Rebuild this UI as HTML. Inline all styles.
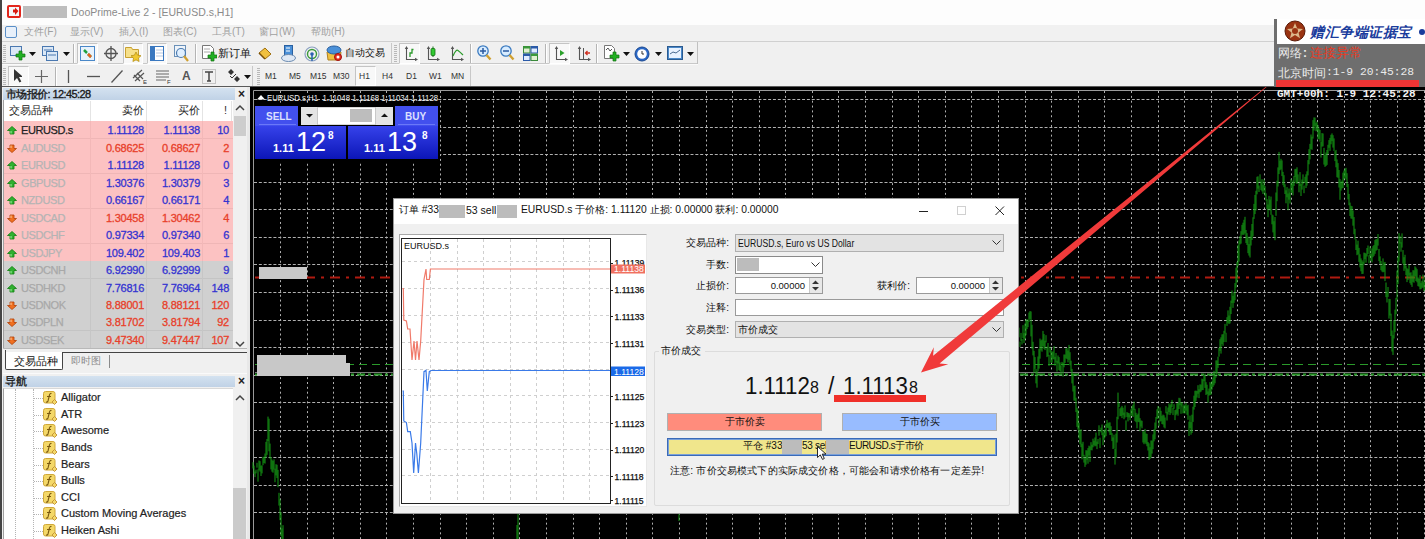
<!DOCTYPE html>
<html><head><meta charset="utf-8">
<style>
*{margin:0;padding:0;box-sizing:border-box}
html,body{width:1425px;height:539px;overflow:hidden;background:#f0f0f0;font-family:"Liberation Sans",sans-serif;position:relative}
.a{position:absolute}
.t{position:absolute;white-space:nowrap;line-height:1}
</style></head><body>
<!-- title bar -->
<div class="a" style="left:0;top:0;width:1425px;height:25px;background:#fdfdfd"></div>
<div class="a" style="left:0;top:0;width:1.5px;height:539px;background:#454545;z-index:50"></div>
<!-- app icon -->
<svg class="a" style="left:7px;top:5px" width="14" height="13" viewBox="0 0 14 13"><rect x="0" y="0" width="14" height="13" rx="2" fill="#e2261c"/><rect x="2" y="2" width="10" height="9" fill="#f4f8fa"/><path d="M8 2.5l3.5 3.5L8 10V7.5H6V4.5h2z" fill="#d81c12"/></svg>
<div class="a" style="left:23px;top:6px;width:44px;height:12px;background:#bdbdbd"></div>
<div class="t" style="left:71px;top:7px;font-size:10.5px;color:#8a8a8a">DooPrime-Live 2 - [EURUSD.s,H1]</div>
<!-- menu bar -->
<div class="a" style="left:2px;top:25px;width:1423px;height:16px;background:#f1f1f1"></div>
<div class="a" style="left:2px;top:41px;width:1423px;height:1px;background:#d0d0d0"></div>
<div class="a" style="left:5px;top:26px;width:12px;height:12px;border:1px solid #5a8fc8;border-radius:2px;background:#e8f0fa"></div>
<div class="t" style="left:24px;top:27px;font-size:10px;color:#a0a0a0;word-spacing:0">文件(F)</div>
<div class="t" style="left:70px;top:27px;font-size:10px;color:#a0a0a0">显示(V)</div>
<div class="t" style="left:119px;top:27px;font-size:10px;color:#a0a0a0">插入(I)</div>
<div class="t" style="left:163px;top:27px;font-size:10px;color:#a0a0a0">图表(C)</div>
<div class="t" style="left:212px;top:27px;font-size:10px;color:#a0a0a0">工具(T)</div>
<div class="t" style="left:259px;top:27px;font-size:10px;color:#a0a0a0">窗口(W)</div>
<div class="t" style="left:311px;top:27px;font-size:10px;color:#a0a0a0">帮助(H)</div>
<!-- toolbars -->
<div id="tb1" class="a" style="left:2px;top:42px;width:1423px;height:23px;background:#f0f0f0"></div>
<div id="tb2" class="a" style="left:2px;top:65px;width:1423px;height:22px;background:#f0f0f0"></div>
<!--TOOLBAR-->
<div class="a" style="left:2px;top:63px;width:696px;height:1px;background:#c8c8c8"></div>
<div class="a" style="left:2px;top:64px;width:696px;height:1px;background:#fafafa"></div>
<div class="a" style="left:2px;top:86px;width:1423px;height:1px;background:#5a5a5a"></div>
<div class="a" style="left:3px;top:45px;width:3px;height:17px;background:repeating-linear-gradient(#b8b8b8 0 1px,transparent 1px 2px)"></div>
<svg class="a" style="left:10px;top:46px" width="16" height="15" viewBox="0 0 16 15"><rect x="0.5" y="0.5" width="11" height="9" fill="#dbe8f6" stroke="#4a78b0"/><path d="M9 5h3v3h3v3h-3v3H9v-3H6V8h3z" fill="#22b022" stroke="#127012" stroke-width="0.7"/></svg>
<svg class="a" style="left:29px;top:52px" width="7" height="4"><path d="M0 0H7L3.5 4Z" fill="#111"/></svg>
<svg class="a" style="left:42px;top:46px" width="16" height="15" viewBox="0 0 16 15"><rect x="0.5" y="0.5" width="11" height="9" fill="#dbe8f6" stroke="#4a78b0"/><rect x="4.5" y="5.5" width="11" height="9" fill="#dbe8f6" stroke="#4a78b0"/><path d="M2 4h8M6 9h8" stroke="#4a78b0"/></svg>
<svg class="a" style="left:63px;top:52px" width="7" height="4"><path d="M0 0H7L3.5 4Z" fill="#111"/></svg>
<div class="a" style="left:73px;top:44px;width:1px;height:19px;background:#b4b4b4"></div><div class="a" style="left:74px;top:44px;width:1px;height:19px;background:#fff"></div>
<div class="a" style="left:77px;top:43px;width:21px;height:21px;background:#f8f8f8;border:1px solid #c4c4c4;border-right-color:#fff;border-bottom-color:#fff"></div>
<svg class="a" style="left:80px;top:46px" width="15" height="15" viewBox="0 0 15 15"><rect x="0.5" y="0.5" width="14" height="14" fill="#e8f2fc" stroke="#4a88c8"/><path d="M4 4l3 3M8 8l3 3" stroke="#20a040" stroke-width="2.5"/><path d="M8 8l3 3" stroke="#e86020" stroke-width="2.5"/></svg>
<svg class="a" style="left:104px;top:46px" width="14" height="15" viewBox="0 0 14 15"><circle cx="7" cy="7.5" r="5" fill="none" stroke="#555" stroke-width="1.3"/><path d="M7 0v15M0 7.5h14" stroke="#555" stroke-width="1.3"/></svg>
<div class="a" style="left:123px;top:43px;width:20px;height:21px;background:#f8f8f8;border:1px solid #c4c4c4;border-right-color:#fff;border-bottom-color:#fff"></div>
<svg class="a" style="left:125px;top:45px" width="17" height="17" viewBox="0 0 17 17"><path d="M0.5 2.5h6l1 2h6v8h-13z" fill="#f6e08a" stroke="#c8a030"/><path d="M11 7l1.6 3.2 3.4.5-2.5 2.4.6 3.4-3.1-1.6-3.1 1.6.6-3.4-2.5-2.4 3.4-.5z" fill="#f0c830" stroke="#b08a10" stroke-width="0.7"/></svg>
<div class="a" style="left:147px;top:43px;width:20px;height:21px;background:#f8f8f8;border:1px solid #c4c4c4;border-right-color:#fff;border-bottom-color:#fff"></div>
<svg class="a" style="left:150px;top:46px" width="14" height="15" viewBox="0 0 14 15"><rect x="0.5" y="0.5" width="13" height="14" fill="#fff" stroke="#3a78c0"/><rect x="1" y="1" width="4" height="13" fill="#3a78c0"/><path d="M6 4h7M6 7h7M6 10h7" stroke="#b8c8e0"/></svg>
<svg class="a" style="left:174px;top:45px" width="15" height="17" viewBox="0 0 15 17"><rect x="0.5" y="0.5" width="11" height="11" fill="#eef4fa" stroke="#6a90b8"/><circle cx="7" cy="8" r="4.5" fill="#dfefff" stroke="#4a7ab0" stroke-width="1.2"/><path d="M10 11l4 5" stroke="#d0a030" stroke-width="2.2"/></svg>
<div class="a" style="left:195px;top:44px;width:1px;height:19px;background:#b4b4b4"></div><div class="a" style="left:196px;top:44px;width:1px;height:19px;background:#fff"></div>
<svg class="a" style="left:202px;top:45px" width="15" height="17" viewBox="0 0 15 17"><path d="M0.5 0.5h8l3 3v10h-11z" fill="#fff" stroke="#777"/><path d="M2 4h6M2 7h6" stroke="#aaa"/><path d="M9 7h3v3h3v3h-3v3H9v-3H6v-3h3z" fill="#22b022" stroke="#127012" stroke-width="0.7"/></svg>
<div class="t" style="left:218px;top:48px;font-size:10.5px;color:#111">新订单</div>
<svg class="a" style="left:258px;top:47px" width="14" height="13" viewBox="0 0 14 13"><path d="M1 6L7 1l6 6-6 5z" fill="#f0c040" stroke="#a07010"/><path d="M1 6l6 6" stroke="#7a5008" stroke-width="1.5"/></svg>
<svg class="a" style="left:281px;top:45px" width="15" height="17" viewBox="0 0 15 17"><rect x="3.5" y="0.5" width="8" height="10" fill="#4a90d8" stroke="#2a60a0"/><path d="M5 3h4M5 6h4" stroke="#fff"/><ellipse cx="7.5" cy="13" rx="7" ry="3.5" fill="#dfe8f4" stroke="#6a8ab0"/></svg>
<svg class="a" style="left:304px;top:46px" width="16" height="16" viewBox="0 0 16 16"><circle cx="8" cy="8" r="7" fill="none" stroke="#8aa0c0" stroke-width="1.2"/><circle cx="8" cy="8" r="4.5" fill="none" stroke="#3a9a3a" stroke-width="1.4"/><circle cx="8" cy="8" r="1.8" fill="#2a60b0"/><path d="M8 9v6" stroke="#2a60b0" stroke-width="1.5"/></svg>
<svg class="a" style="left:326px;top:45px" width="17" height="17" viewBox="0 0 17 17"><path d="M1 7h14l-1 8H2z" fill="#f0c040" stroke="#b08020"/><ellipse cx="8" cy="5" rx="7" ry="4" fill="#4a90d8" stroke="#2a60a0"/><circle cx="12" cy="12" r="3.5" fill="#e83020" stroke="#a01010"/><circle cx="12" cy="12" r="1.5" fill="#fff"/></svg>
<div class="t" style="left:345px;top:48px;font-size:10px;color:#111">自动交易</div>
<div class="a" style="left:391px;top:43px;width:1px;height:21px;background:#c8c8c8"></div>
<div class="a" style="left:394px;top:45px;width:3px;height:17px;background:repeating-linear-gradient(#b8b8b8 0 1px,transparent 1px 2px)"></div>
<div class="a" style="left:399px;top:43px;width:21px;height:21px;background:#f8f8f8;border:1px solid #c4c4c4;border-right-color:#fff;border-bottom-color:#fff"></div>
<svg class="a" style="left:403px;top:46px" width="15" height="15" viewBox="0 0 15 15"><path d="M3.5 1.5V13.5H14" stroke="#555" stroke-width="1.1" fill="none"/><path d="M3.5 0L1.8 3h3.4zM15 13.5l-3-1.7v3.4z" fill="#555"/><path d="M7 11V7H9V3.5H10.5" stroke="#2a9a2a" stroke-width="1.3" fill="none"/></svg>
<svg class="a" style="left:425px;top:46px" width="15" height="15" viewBox="0 0 15 15"><path d="M3.5 1.5V13.5H14" stroke="#555" stroke-width="1.1" fill="none"/><path d="M3.5 0L1.8 3h3.4zM15 13.5l-3-1.7v3.4z" fill="#555"/><path d="M8 0.5V11" stroke="#127012"/><rect x="6" y="2.5" width="4" height="7" rx="1" fill="#30c830" stroke="#127012" stroke-width="0.8"/></svg>
<svg class="a" style="left:449px;top:46px" width="15" height="15" viewBox="0 0 15 15"><path d="M3.5 1.5V13.5H14" stroke="#555" stroke-width="1.1" fill="none"/><path d="M3.5 0L1.8 3h3.4zM15 13.5l-3-1.7v3.4z" fill="#555"/><path d="M4 10Q7 3 9 4.5T14 9" stroke="#2a9a2a" stroke-width="1.2" fill="none"/></svg>
<div class="a" style="left:470px;top:44px;width:1px;height:19px;background:#b4b4b4"></div><div class="a" style="left:471px;top:44px;width:1px;height:19px;background:#fff"></div>
<svg class="a" style="left:477px;top:45px" width="15" height="16" viewBox="0 0 15 16"><circle cx="6" cy="6" r="5.2" fill="#d8ecff" stroke="#3a7ac0" stroke-width="1.3"/><path d="M3 6h6M6 3v6" stroke="#2a5aa0" stroke-width="1.5"/><path d="M9.5 10l4 4.5" stroke="#d0a030" stroke-width="2.4"/></svg>
<svg class="a" style="left:500px;top:45px" width="15" height="16" viewBox="0 0 15 16"><circle cx="6" cy="6" r="5.2" fill="#d8ecff" stroke="#3a7ac0" stroke-width="1.3"/><path d="M3 6h6" stroke="#2a5aa0" stroke-width="1.5"/><path d="M9.5 10l4 4.5" stroke="#d0a030" stroke-width="2.4"/></svg>
<svg class="a" style="left:523px;top:46px" width="15" height="15" viewBox="0 0 15 15"><rect x="0.5" y="0.5" width="6.5" height="6.5" fill="#e0f0d0" stroke="#3a8a3a"/><rect x="0.5" y="0.5" width="6.5" height="2" fill="#3a9a3a"/><rect x="8" y="0.5" width="6.5" height="6.5" fill="#e0ecff" stroke="#2a5aa8"/><rect x="8" y="0.5" width="6.5" height="2" fill="#2a5aa8"/><rect x="0.5" y="8" width="6.5" height="6.5" fill="#e0ecff" stroke="#2a5aa8"/><rect x="0.5" y="8" width="6.5" height="2" fill="#2a5aa8"/><rect x="8" y="8" width="6.5" height="6.5" fill="#e0f0d0" stroke="#3a8a3a"/><rect x="8" y="8" width="6.5" height="2" fill="#3a9a3a"/></svg>
<div class="a" style="left:545px;top:44px;width:1px;height:19px;background:#b4b4b4"></div><div class="a" style="left:546px;top:44px;width:1px;height:19px;background:#fff"></div>
<div class="a" style="left:549px;top:43px;width:21px;height:21px;background:#f8f8f8;border:1px solid #c4c4c4;border-right-color:#fff;border-bottom-color:#fff"></div>
<svg class="a" style="left:553px;top:46px" width="15" height="15" viewBox="0 0 15 15"><path d="M3.5 1.5V13.5H14" stroke="#555" stroke-width="1.1" fill="none"/><path d="M3.5 0L1.8 3h3.4zM15 13.5l-3-1.7v3.4z" fill="#555"/><path d="M7 4v6l4.5-3z" fill="#2aa02a"/></svg>
<svg class="a" style="left:576px;top:46px" width="15" height="15" viewBox="0 0 15 15"><path d="M3.5 1.5V13.5H14" stroke="#555" stroke-width="1.1" fill="none"/><path d="M3.5 0L1.8 3h3.4zM15 13.5l-3-1.7v3.4z" fill="#555"/><path d="M7.5 2v11" stroke="#555"/><path d="M14 7H9.5M11.5 5l-2 2 2 2" stroke="#d03020" stroke-width="1.3" fill="none"/></svg>
<div class="a" style="left:596px;top:44px;width:1px;height:19px;background:#b4b4b4"></div><div class="a" style="left:597px;top:44px;width:1px;height:19px;background:#fff"></div>
<svg class="a" style="left:604px;top:45px" width="16" height="17" viewBox="0 0 16 17"><path d="M0.5 0.5h7l3 3v10h-10z" fill="#fff" stroke="#777"/><path d="M2 5l2-2 2 3 2-2" stroke="#555" fill="none"/><path d="M9 7h3v3h3v3h-3v3H9v-3H6v-3h3z" fill="#22b022" stroke="#127012" stroke-width="0.7"/></svg>
<svg class="a" style="left:623px;top:52px" width="7" height="4"><path d="M0 0H7L3.5 4Z" fill="#111"/></svg>
<svg class="a" style="left:634px;top:46px" width="16" height="16" viewBox="0 0 16 16"><circle cx="8" cy="8" r="7" fill="#2a68c8" stroke="#1a4890"/><circle cx="8" cy="8" r="4.8" fill="#fff"/><path d="M8 5v3h2" stroke="#333" fill="none"/></svg>
<svg class="a" style="left:655px;top:52px" width="7" height="4"><path d="M0 0H7L3.5 4Z" fill="#111"/></svg>
<svg class="a" style="left:667px;top:46px" width="16" height="14" viewBox="0 0 16 14"><rect x="0.5" y="0.5" width="15" height="13" fill="#4a88c8" stroke="#2a5a90"/><rect x="2" y="2" width="12" height="10" fill="#e8f2ff"/><path d="M3 8l3-2 3 1 4-3" stroke="#4a6a90" fill="none"/></svg>
<svg class="a" style="left:687px;top:52px" width="7" height="4"><path d="M0 0H7L3.5 4Z" fill="#111"/></svg>
<div class="a" style="left:697px;top:42px;width:1px;height:22px;background:#c0c0c0"></div>
<div class="a" style="left:3px;top:68px;width:3px;height:17px;background:repeating-linear-gradient(#b8b8b8 0 1px,transparent 1px 2px)"></div>
<div class="a" style="left:8px;top:66px;width:21px;height:20px;background:#f8f8f8;border:1px solid #c4c4c4;border-right-color:#fff;border-bottom-color:#fff"></div>
<svg class="a" style="left:13px;top:69px" width="9" height="14" viewBox="0 0 9 14"><path d="M1 0v12l3-3 2.5 4.5 1.8-1L6 8h4z" fill="#333"/></svg>
<svg class="a" style="left:35px;top:70px" width="13" height="13" viewBox="0 0 13 13"><path d="M6.5 0v13M0 6.5h13" stroke="#666" stroke-width="1.2"/></svg>
<div class="a" style="left:55px;top:67px;width:1px;height:19px;background:#b4b4b4"></div><div class="a" style="left:56px;top:67px;width:1px;height:19px;background:#fff"></div>
<svg class="a" style="left:67px;top:70px" width="3" height="13" viewBox="0 0 3 13"><path d="M1.5 0v13" stroke="#555" stroke-width="1.3"/></svg>
<svg class="a" style="left:87px;top:75px" width="13" height="3" viewBox="0 0 13 3"><path d="M0 1.5h13" stroke="#555" stroke-width="1.3"/></svg>
<svg class="a" style="left:111px;top:70px" width="12" height="13" viewBox="0 0 12 13"><path d="M0.5 12.5L11.5 0.5" stroke="#555" stroke-width="1.3"/></svg>
<svg class="a" style="left:132px;top:69px" width="15" height="15" viewBox="0 0 15 15"><path d="M1 9L10 1M3 12L12 4M2 6l6 6M5 4l6 6" stroke="#555" stroke-width="1.2"/><text x="11" y="15" font-size="6" font-family="Liberation Sans" fill="#333">E</text></svg>
<svg class="a" style="left:155px;top:70px" width="16" height="14" viewBox="0 0 16 14"><path d="M1 1h13M1 4h13M1 7h13M1 10h10" stroke="#666"/><text x="12" y="14" font-size="6" font-family="Liberation Sans" fill="#333">F</text></svg>
<div class="t" style="left:182px;top:70px;font-size:12px;color:#555;font-weight:bold">A</div>
<svg class="a" style="left:202px;top:69px" width="14" height="15" viewBox="0 0 14 15"><rect x="0.5" y="0.5" width="13" height="14" fill="none" stroke="#999" stroke-dasharray="1 1"/><path d="M3 3h8M7 3v9M5 12h4" stroke="#444" stroke-width="1.5"/></svg>
<svg class="a" style="left:228px;top:69px" width="12" height="13" viewBox="0 0 12 13"><path d="M3 0l3 3-3 3-3-3zM9 7l3 3-3 3-3-3z" fill="#333"/><path d="M2 7l2 2 4-4" stroke="#333" fill="none"/></svg>
<svg class="a" style="left:244px;top:75px" width="7" height="4"><path d="M0 0H7L3.5 4Z" fill="#111"/></svg>
<div class="a" style="left:252px;top:66px;width:1px;height:20px;background:#c8c8c8"></div>
<div class="a" style="left:257px;top:68px;width:3px;height:17px;background:repeating-linear-gradient(#b8b8b8 0 1px,transparent 1px 2px)"></div>
<div class="t" style="left:265px;top:72px;font-size:8.5px;color:#333">M1</div>
<div class="t" style="left:289px;top:72px;font-size:8.5px;color:#333">M5</div>
<div class="t" style="left:310px;top:72px;font-size:8.5px;color:#333">M15</div>
<div class="t" style="left:333px;top:72px;font-size:8.5px;color:#333">M30</div>
<div class="a" style="left:355px;top:66px;width:21px;height:20px;background:#f8f8f8;border:1px solid #c4c4c4;border-right-color:#fff;border-bottom-color:#fff"></div>
<div class="t" style="left:359px;top:72px;font-size:8.5px;color:#333">H1</div>
<div class="t" style="left:382px;top:72px;font-size:8.5px;color:#333">H4</div>
<div class="t" style="left:406px;top:72px;font-size:8.5px;color:#333">D1</div>
<div class="t" style="left:429px;top:72px;font-size:8.5px;color:#333">W1</div>
<div class="t" style="left:451px;top:72px;font-size:8.5px;color:#333">MN</div>
<div class="a" style="left:470px;top:66px;width:1px;height:20px;background:#c8c8c8"></div>
<!--/TOOLBAR-->
<!--LEFT-->
<div class="a" style="left:2px;top:87px;width:248px;height:452px;background:#f0f0f0"></div>
<div class="a" style="left:3px;top:88px;width:232px;height:12px;background:linear-gradient(#d4e2f0,#c0d2e6)"></div>
<div class="t" style="left:6px;top:89px;font-size:11px;letter-spacing:-0.6px;-webkit-text-stroke:0.35px #1a1a1a;color:#1a1a1a">市场报价: 12:45:28</div>
<div class="t" style="left:238px;top:88px;font-size:12px;font-weight:bold;color:#222">×</div>
<div class="a" style="left:3px;top:100px;width:230px;height:248px;background:#fff;border-left:1px solid #a0a0a0"></div>
<div class="t" style="left:9px;top:105px;font-size:10.5px;color:#222">交易品种</div>
<div class="t" style="left:122px;top:105px;font-size:10.5px;color:#222">卖价</div>
<div class="t" style="left:178px;top:105px;font-size:10.5px;color:#222">买价</div>
<div class="t" style="left:224px;top:105px;font-size:11px;color:#333">!</div>
<div class="a" style="left:90px;top:101px;width:1px;height:20px;background:#e4e4e4"></div>
<div class="a" style="left:146px;top:101px;width:1px;height:20px;background:#e4e4e4"></div>
<div class="a" style="left:202px;top:101px;width:1px;height:20px;background:#e4e4e4"></div>
<div class="a" style="left:231px;top:101px;width:1px;height:20px;background:#e4e4e4"></div>
<div class="a" style="left:4px;top:121px;width:229px;height:18px;background:#fcc2c2;border-bottom:1px solid #efb6b6"></div>
<div class="a" style="left:90px;top:121px;width:1px;height:18px;background:#f3b8b8"></div>
<div class="a" style="left:146px;top:121px;width:1px;height:18px;background:#f3b8b8"></div>
<div class="a" style="left:202px;top:121px;width:1px;height:18px;background:#f3b8b8"></div>
<svg class="a" style="left:7px;top:126px" width="10" height="9"><path d="M5 0.5L9.5 4.5H7V8H3V4.5H0.5Z" fill="#30b030" stroke="#108010" stroke-width="0.8"/><path d="M4 5v2.5" stroke="#a0f0a0" stroke-width="1"/></svg>
<div class="t" style="left:21px;top:125px;font-size:11px;letter-spacing:-0.4px;-webkit-text-stroke:0.25px #222;color:#222">EURUSD.s</div>
<div class="t" style="right:1281px;top:125px;font-size:11px;letter-spacing:-0.25px;-webkit-text-stroke:0.3px #3434d0;color:#3434d0">1.11128</div>
<div class="t" style="right:1225px;top:125px;font-size:11px;letter-spacing:-0.25px;-webkit-text-stroke:0.3px #3434d0;color:#3434d0">1.11138</div>
<div class="t" style="right:1196px;top:125px;font-size:11px;letter-spacing:-0.25px;-webkit-text-stroke:0.3px #3434d0;color:#3434d0">10</div>
<div class="a" style="left:4px;top:139px;width:229px;height:18px;background:#fcc2c2;border-bottom:1px solid #efb6b6"></div>
<div class="a" style="left:90px;top:139px;width:1px;height:18px;background:#f3b8b8"></div>
<div class="a" style="left:146px;top:139px;width:1px;height:18px;background:#f3b8b8"></div>
<div class="a" style="left:202px;top:139px;width:1px;height:18px;background:#f3b8b8"></div>
<svg class="a" style="left:7px;top:144px" width="10" height="9"><path d="M5 8.5L9.5 4.5H7V1H3V4.5H0.5Z" fill="#f07020" stroke="#b04008" stroke-width="0.8"/><path d="M4 1.5v2.5" stroke="#ffd0a0" stroke-width="1"/></svg>
<div class="t" style="left:21px;top:143px;font-size:11px;letter-spacing:-0.4px;-webkit-text-stroke:0.25px #b4b4b4;color:#b4b4b4">AUDUSD</div>
<div class="t" style="right:1281px;top:143px;font-size:11px;letter-spacing:-0.25px;-webkit-text-stroke:0.3px #e8402a;color:#e8402a">0.68625</div>
<div class="t" style="right:1225px;top:143px;font-size:11px;letter-spacing:-0.25px;-webkit-text-stroke:0.3px #e8402a;color:#e8402a">0.68627</div>
<div class="t" style="right:1196px;top:143px;font-size:11px;letter-spacing:-0.25px;-webkit-text-stroke:0.3px #e8402a;color:#e8402a">2</div>
<div class="a" style="left:4px;top:156px;width:229px;height:18px;background:#fcc2c2;border-bottom:1px solid #efb6b6"></div>
<div class="a" style="left:90px;top:156px;width:1px;height:18px;background:#f3b8b8"></div>
<div class="a" style="left:146px;top:156px;width:1px;height:18px;background:#f3b8b8"></div>
<div class="a" style="left:202px;top:156px;width:1px;height:18px;background:#f3b8b8"></div>
<svg class="a" style="left:7px;top:161px" width="10" height="9"><path d="M5 0.5L9.5 4.5H7V8H3V4.5H0.5Z" fill="#30b030" stroke="#108010" stroke-width="0.8"/><path d="M4 5v2.5" stroke="#a0f0a0" stroke-width="1"/></svg>
<div class="t" style="left:21px;top:160px;font-size:11px;letter-spacing:-0.4px;-webkit-text-stroke:0.25px #b4b4b4;color:#b4b4b4">EURUSD</div>
<div class="t" style="right:1281px;top:160px;font-size:11px;letter-spacing:-0.25px;-webkit-text-stroke:0.3px #3434d0;color:#3434d0">1.11128</div>
<div class="t" style="right:1225px;top:160px;font-size:11px;letter-spacing:-0.25px;-webkit-text-stroke:0.3px #3434d0;color:#3434d0">1.11128</div>
<div class="t" style="right:1196px;top:160px;font-size:11px;letter-spacing:-0.25px;-webkit-text-stroke:0.3px #3434d0;color:#3434d0">0</div>
<div class="a" style="left:4px;top:174px;width:229px;height:18px;background:#fcc2c2;border-bottom:1px solid #efb6b6"></div>
<div class="a" style="left:90px;top:174px;width:1px;height:18px;background:#f3b8b8"></div>
<div class="a" style="left:146px;top:174px;width:1px;height:18px;background:#f3b8b8"></div>
<div class="a" style="left:202px;top:174px;width:1px;height:18px;background:#f3b8b8"></div>
<svg class="a" style="left:7px;top:179px" width="10" height="9"><path d="M5 0.5L9.5 4.5H7V8H3V4.5H0.5Z" fill="#30b030" stroke="#108010" stroke-width="0.8"/><path d="M4 5v2.5" stroke="#a0f0a0" stroke-width="1"/></svg>
<div class="t" style="left:21px;top:178px;font-size:11px;letter-spacing:-0.4px;-webkit-text-stroke:0.25px #b4b4b4;color:#b4b4b4">GBPUSD</div>
<div class="t" style="right:1281px;top:178px;font-size:11px;letter-spacing:-0.25px;-webkit-text-stroke:0.3px #3434d0;color:#3434d0">1.30376</div>
<div class="t" style="right:1225px;top:178px;font-size:11px;letter-spacing:-0.25px;-webkit-text-stroke:0.3px #3434d0;color:#3434d0">1.30379</div>
<div class="t" style="right:1196px;top:178px;font-size:11px;letter-spacing:-0.25px;-webkit-text-stroke:0.3px #3434d0;color:#3434d0">3</div>
<div class="a" style="left:4px;top:191px;width:229px;height:18px;background:#fcc2c2;border-bottom:1px solid #efb6b6"></div>
<div class="a" style="left:90px;top:191px;width:1px;height:18px;background:#f3b8b8"></div>
<div class="a" style="left:146px;top:191px;width:1px;height:18px;background:#f3b8b8"></div>
<div class="a" style="left:202px;top:191px;width:1px;height:18px;background:#f3b8b8"></div>
<svg class="a" style="left:7px;top:196px" width="10" height="9"><path d="M5 0.5L9.5 4.5H7V8H3V4.5H0.5Z" fill="#30b030" stroke="#108010" stroke-width="0.8"/><path d="M4 5v2.5" stroke="#a0f0a0" stroke-width="1"/></svg>
<div class="t" style="left:21px;top:195px;font-size:11px;letter-spacing:-0.4px;-webkit-text-stroke:0.25px #b4b4b4;color:#b4b4b4">NZDUSD</div>
<div class="t" style="right:1281px;top:195px;font-size:11px;letter-spacing:-0.25px;-webkit-text-stroke:0.3px #3434d0;color:#3434d0">0.66167</div>
<div class="t" style="right:1225px;top:195px;font-size:11px;letter-spacing:-0.25px;-webkit-text-stroke:0.3px #3434d0;color:#3434d0">0.66171</div>
<div class="t" style="right:1196px;top:195px;font-size:11px;letter-spacing:-0.25px;-webkit-text-stroke:0.3px #3434d0;color:#3434d0">4</div>
<div class="a" style="left:4px;top:209px;width:229px;height:18px;background:#fcc2c2;border-bottom:1px solid #efb6b6"></div>
<div class="a" style="left:90px;top:209px;width:1px;height:18px;background:#f3b8b8"></div>
<div class="a" style="left:146px;top:209px;width:1px;height:18px;background:#f3b8b8"></div>
<div class="a" style="left:202px;top:209px;width:1px;height:18px;background:#f3b8b8"></div>
<svg class="a" style="left:7px;top:214px" width="10" height="9"><path d="M5 8.5L9.5 4.5H7V1H3V4.5H0.5Z" fill="#f07020" stroke="#b04008" stroke-width="0.8"/><path d="M4 1.5v2.5" stroke="#ffd0a0" stroke-width="1"/></svg>
<div class="t" style="left:21px;top:213px;font-size:11px;letter-spacing:-0.4px;-webkit-text-stroke:0.25px #b4b4b4;color:#b4b4b4">USDCAD</div>
<div class="t" style="right:1281px;top:213px;font-size:11px;letter-spacing:-0.25px;-webkit-text-stroke:0.3px #e8402a;color:#e8402a">1.30458</div>
<div class="t" style="right:1225px;top:213px;font-size:11px;letter-spacing:-0.25px;-webkit-text-stroke:0.3px #e8402a;color:#e8402a">1.30462</div>
<div class="t" style="right:1196px;top:213px;font-size:11px;letter-spacing:-0.25px;-webkit-text-stroke:0.3px #e8402a;color:#e8402a">4</div>
<div class="a" style="left:4px;top:226px;width:229px;height:18px;background:#fcc2c2;border-bottom:1px solid #efb6b6"></div>
<div class="a" style="left:90px;top:226px;width:1px;height:18px;background:#f3b8b8"></div>
<div class="a" style="left:146px;top:226px;width:1px;height:18px;background:#f3b8b8"></div>
<div class="a" style="left:202px;top:226px;width:1px;height:18px;background:#f3b8b8"></div>
<svg class="a" style="left:7px;top:231px" width="10" height="9"><path d="M5 0.5L9.5 4.5H7V8H3V4.5H0.5Z" fill="#30b030" stroke="#108010" stroke-width="0.8"/><path d="M4 5v2.5" stroke="#a0f0a0" stroke-width="1"/></svg>
<div class="t" style="left:21px;top:230px;font-size:11px;letter-spacing:-0.4px;-webkit-text-stroke:0.25px #b4b4b4;color:#b4b4b4">USDCHF</div>
<div class="t" style="right:1281px;top:230px;font-size:11px;letter-spacing:-0.25px;-webkit-text-stroke:0.3px #3434d0;color:#3434d0">0.97334</div>
<div class="t" style="right:1225px;top:230px;font-size:11px;letter-spacing:-0.25px;-webkit-text-stroke:0.3px #3434d0;color:#3434d0">0.97340</div>
<div class="t" style="right:1196px;top:230px;font-size:11px;letter-spacing:-0.25px;-webkit-text-stroke:0.3px #3434d0;color:#3434d0">6</div>
<div class="a" style="left:4px;top:244px;width:229px;height:18px;background:#fcc2c2;border-bottom:1px solid #efb6b6"></div>
<div class="a" style="left:90px;top:244px;width:1px;height:18px;background:#f3b8b8"></div>
<div class="a" style="left:146px;top:244px;width:1px;height:18px;background:#f3b8b8"></div>
<div class="a" style="left:202px;top:244px;width:1px;height:18px;background:#f3b8b8"></div>
<svg class="a" style="left:7px;top:249px" width="10" height="9"><path d="M5 0.5L9.5 4.5H7V8H3V4.5H0.5Z" fill="#30b030" stroke="#108010" stroke-width="0.8"/><path d="M4 5v2.5" stroke="#a0f0a0" stroke-width="1"/></svg>
<div class="t" style="left:21px;top:248px;font-size:11px;letter-spacing:-0.4px;-webkit-text-stroke:0.25px #b4b4b4;color:#b4b4b4">USDJPY</div>
<div class="t" style="right:1281px;top:248px;font-size:11px;letter-spacing:-0.25px;-webkit-text-stroke:0.3px #3434d0;color:#3434d0">109.402</div>
<div class="t" style="right:1225px;top:248px;font-size:11px;letter-spacing:-0.25px;-webkit-text-stroke:0.3px #3434d0;color:#3434d0">109.403</div>
<div class="t" style="right:1196px;top:248px;font-size:11px;letter-spacing:-0.25px;-webkit-text-stroke:0.3px #3434d0;color:#3434d0">1</div>
<div class="a" style="left:4px;top:261px;width:229px;height:18px;background:#d0d0d0;border-bottom:1px solid #c4c4c4"></div>
<div class="a" style="left:90px;top:261px;width:1px;height:18px;background:#c6c6c6"></div>
<div class="a" style="left:146px;top:261px;width:1px;height:18px;background:#c6c6c6"></div>
<div class="a" style="left:202px;top:261px;width:1px;height:18px;background:#c6c6c6"></div>
<svg class="a" style="left:7px;top:266px" width="10" height="9"><path d="M5 0.5L9.5 4.5H7V8H3V4.5H0.5Z" fill="#30b030" stroke="#108010" stroke-width="0.8"/><path d="M4 5v2.5" stroke="#a0f0a0" stroke-width="1"/></svg>
<div class="t" style="left:21px;top:265px;font-size:11px;letter-spacing:-0.4px;-webkit-text-stroke:0.25px #a8a8a8;color:#a8a8a8">USDCNH</div>
<div class="t" style="right:1281px;top:265px;font-size:11px;letter-spacing:-0.25px;-webkit-text-stroke:0.3px #3434d0;color:#3434d0">6.92990</div>
<div class="t" style="right:1225px;top:265px;font-size:11px;letter-spacing:-0.25px;-webkit-text-stroke:0.3px #3434d0;color:#3434d0">6.92999</div>
<div class="t" style="right:1196px;top:265px;font-size:11px;letter-spacing:-0.25px;-webkit-text-stroke:0.3px #3434d0;color:#3434d0">9</div>
<div class="a" style="left:4px;top:279px;width:229px;height:18px;background:#d0d0d0;border-bottom:1px solid #c4c4c4"></div>
<div class="a" style="left:90px;top:279px;width:1px;height:18px;background:#c6c6c6"></div>
<div class="a" style="left:146px;top:279px;width:1px;height:18px;background:#c6c6c6"></div>
<div class="a" style="left:202px;top:279px;width:1px;height:18px;background:#c6c6c6"></div>
<svg class="a" style="left:7px;top:284px" width="10" height="9"><path d="M5 0.5L9.5 4.5H7V8H3V4.5H0.5Z" fill="#30b030" stroke="#108010" stroke-width="0.8"/><path d="M4 5v2.5" stroke="#a0f0a0" stroke-width="1"/></svg>
<div class="t" style="left:21px;top:283px;font-size:11px;letter-spacing:-0.4px;-webkit-text-stroke:0.25px #a8a8a8;color:#a8a8a8">USDHKD</div>
<div class="t" style="right:1281px;top:283px;font-size:11px;letter-spacing:-0.25px;-webkit-text-stroke:0.3px #3434d0;color:#3434d0">7.76816</div>
<div class="t" style="right:1225px;top:283px;font-size:11px;letter-spacing:-0.25px;-webkit-text-stroke:0.3px #3434d0;color:#3434d0">7.76964</div>
<div class="t" style="right:1196px;top:283px;font-size:11px;letter-spacing:-0.25px;-webkit-text-stroke:0.3px #3434d0;color:#3434d0">148</div>
<div class="a" style="left:4px;top:296px;width:229px;height:18px;background:#d0d0d0;border-bottom:1px solid #c4c4c4"></div>
<div class="a" style="left:90px;top:296px;width:1px;height:18px;background:#c6c6c6"></div>
<div class="a" style="left:146px;top:296px;width:1px;height:18px;background:#c6c6c6"></div>
<div class="a" style="left:202px;top:296px;width:1px;height:18px;background:#c6c6c6"></div>
<svg class="a" style="left:7px;top:301px" width="10" height="9"><path d="M5 8.5L9.5 4.5H7V1H3V4.5H0.5Z" fill="#f07020" stroke="#b04008" stroke-width="0.8"/><path d="M4 1.5v2.5" stroke="#ffd0a0" stroke-width="1"/></svg>
<div class="t" style="left:21px;top:300px;font-size:11px;letter-spacing:-0.4px;-webkit-text-stroke:0.25px #a8a8a8;color:#a8a8a8">USDNOK</div>
<div class="t" style="right:1281px;top:300px;font-size:11px;letter-spacing:-0.25px;-webkit-text-stroke:0.3px #e8402a;color:#e8402a">8.88001</div>
<div class="t" style="right:1225px;top:300px;font-size:11px;letter-spacing:-0.25px;-webkit-text-stroke:0.3px #e8402a;color:#e8402a">8.88121</div>
<div class="t" style="right:1196px;top:300px;font-size:11px;letter-spacing:-0.25px;-webkit-text-stroke:0.3px #e8402a;color:#e8402a">120</div>
<div class="a" style="left:4px;top:313px;width:229px;height:18px;background:#d0d0d0;border-bottom:1px solid #c4c4c4"></div>
<div class="a" style="left:90px;top:313px;width:1px;height:18px;background:#c6c6c6"></div>
<div class="a" style="left:146px;top:313px;width:1px;height:18px;background:#c6c6c6"></div>
<div class="a" style="left:202px;top:313px;width:1px;height:18px;background:#c6c6c6"></div>
<svg class="a" style="left:7px;top:318px" width="10" height="9"><path d="M5 8.5L9.5 4.5H7V1H3V4.5H0.5Z" fill="#f07020" stroke="#b04008" stroke-width="0.8"/><path d="M4 1.5v2.5" stroke="#ffd0a0" stroke-width="1"/></svg>
<div class="t" style="left:21px;top:317px;font-size:11px;letter-spacing:-0.4px;-webkit-text-stroke:0.25px #a8a8a8;color:#a8a8a8">USDPLN</div>
<div class="t" style="right:1281px;top:317px;font-size:11px;letter-spacing:-0.25px;-webkit-text-stroke:0.3px #e8402a;color:#e8402a">3.81702</div>
<div class="t" style="right:1225px;top:317px;font-size:11px;letter-spacing:-0.25px;-webkit-text-stroke:0.3px #e8402a;color:#e8402a">3.81794</div>
<div class="t" style="right:1196px;top:317px;font-size:11px;letter-spacing:-0.25px;-webkit-text-stroke:0.3px #e8402a;color:#e8402a">92</div>
<div class="a" style="left:4px;top:331px;width:229px;height:18px;background:#d0d0d0;border-bottom:1px solid #c4c4c4"></div>
<div class="a" style="left:90px;top:331px;width:1px;height:18px;background:#c6c6c6"></div>
<div class="a" style="left:146px;top:331px;width:1px;height:18px;background:#c6c6c6"></div>
<div class="a" style="left:202px;top:331px;width:1px;height:18px;background:#c6c6c6"></div>
<svg class="a" style="left:7px;top:336px" width="10" height="9"><path d="M5 8.5L9.5 4.5H7V1H3V4.5H0.5Z" fill="#f07020" stroke="#b04008" stroke-width="0.8"/><path d="M4 1.5v2.5" stroke="#ffd0a0" stroke-width="1"/></svg>
<div class="t" style="left:21px;top:335px;font-size:11px;letter-spacing:-0.4px;-webkit-text-stroke:0.25px #a8a8a8;color:#a8a8a8">USDSEK</div>
<div class="t" style="right:1281px;top:335px;font-size:11px;letter-spacing:-0.25px;-webkit-text-stroke:0.3px #e8402a;color:#e8402a">9.47340</div>
<div class="t" style="right:1225px;top:335px;font-size:11px;letter-spacing:-0.25px;-webkit-text-stroke:0.3px #e8402a;color:#e8402a">9.47447</div>
<div class="t" style="right:1196px;top:335px;font-size:11px;letter-spacing:-0.25px;-webkit-text-stroke:0.3px #e8402a;color:#e8402a">107</div>
<div class="a" style="left:233px;top:100px;width:14px;height:248px;background:#f0f0f0"></div>
<svg class="a" style="left:235px;top:104px" width="10" height="7"><path d="M1 6L5 2L9 6" stroke="#444" stroke-width="1.5" fill="none"/></svg>
<div class="a" style="left:234px;top:116px;width:12px;height:20px;background:#cdcdcd"></div>
<svg class="a" style="left:235px;top:341px" width="10" height="7"><path d="M1 1L5 5L9 1" stroke="#444" stroke-width="1.5" fill="none"/></svg>
<div class="a" style="left:3px;top:348px;width:244px;height:1px;background:#b8b8b8"></div>
<div class="a" style="left:3px;top:349px;width:244px;height:24px;background:#f0f0f0"></div>
<div class="a" style="left:62px;top:352px;width:185px;height:1px;background:#444"></div>
<div class="a" style="left:5px;top:352px;width:58px;height:18px;background:#fff;border:1px solid #444;border-top:none;border-radius:0 0 2px 2px"></div>
<div class="a" style="left:5px;top:350px;width:1px;height:3px;background:#444"></div>
<div class="t" style="left:14px;top:356px;font-size:10.5px;color:#111">交易品种</div>
<div class="t" style="left:71px;top:356px;font-size:10px;color:#8a8a8a">即时图</div>
<div class="a" style="left:109px;top:355px;width:1px;height:13px;background:#8a8a8a"></div>
<div class="a" style="left:3px;top:373px;width:244px;height:1px;background:#fafafa"></div>
<div class="a" style="left:3px;top:376px;width:232px;height:11px;background:linear-gradient(#d4e2f0,#c0d2e6)"></div>
<div class="t" style="left:5px;top:376px;font-size:11px;-webkit-text-stroke:0.35px #1a1a1a;color:#1a1a1a">导航</div>
<div class="t" style="left:238px;top:375px;font-size:12px;font-weight:bold;color:#222">×</div>
<div class="a" style="left:3px;top:388px;width:230px;height:151px;background:#fff;border-left:1px solid #a0a0a0;border-top:1px solid #d8d8d8"></div>
<div class="a" style="left:15px;top:389px;width:0;height:150px;border-left:1px dotted #b4b4b4"></div>
<div class="a" style="left:33px;top:389px;width:0;height:150px;border-left:1px dotted #b4b4b4"></div>
<div class="a" style="left:34px;top:398px;width:9px;height:0;border-top:1px dotted #b4b4b4"></div>
<svg class="a" style="left:43px;top:391px" width="15" height="15"><rect x="0.5" y="0.5" width="11.5" height="11.5" rx="2" fill="#f4d868" stroke="#d0a838"/><path d="M8.5 2.5Q7 2 6.5 4L5 10Q4.5 11.5 3 11M4 5.5h4" stroke="#7a5a10" stroke-width="1.1" fill="none"/><path d="M11.5 8.5l2.5 2.5-2.5 2.5-2.5-2.5z" fill="#f4d868" stroke="#c09030" stroke-width="0.9"/></svg>
<div class="t" style="left:61px;top:392px;font-size:11px;-webkit-text-stroke:0.2px #222;color:#222">Alligator</div>
<div class="a" style="left:34px;top:415px;width:9px;height:0;border-top:1px dotted #b4b4b4"></div>
<svg class="a" style="left:43px;top:408px" width="15" height="15"><rect x="0.5" y="0.5" width="11.5" height="11.5" rx="2" fill="#f4d868" stroke="#d0a838"/><path d="M8.5 2.5Q7 2 6.5 4L5 10Q4.5 11.5 3 11M4 5.5h4" stroke="#7a5a10" stroke-width="1.1" fill="none"/><path d="M11.5 8.5l2.5 2.5-2.5 2.5-2.5-2.5z" fill="#f4d868" stroke="#c09030" stroke-width="0.9"/></svg>
<div class="t" style="left:61px;top:409px;font-size:11px;-webkit-text-stroke:0.2px #222;color:#222">ATR</div>
<div class="a" style="left:34px;top:431px;width:9px;height:0;border-top:1px dotted #b4b4b4"></div>
<svg class="a" style="left:43px;top:424px" width="15" height="15"><rect x="0.5" y="0.5" width="11.5" height="11.5" rx="2" fill="#f4d868" stroke="#d0a838"/><path d="M8.5 2.5Q7 2 6.5 4L5 10Q4.5 11.5 3 11M4 5.5h4" stroke="#7a5a10" stroke-width="1.1" fill="none"/><path d="M11.5 8.5l2.5 2.5-2.5 2.5-2.5-2.5z" fill="#f4d868" stroke="#c09030" stroke-width="0.9"/></svg>
<div class="t" style="left:61px;top:425px;font-size:11px;-webkit-text-stroke:0.2px #222;color:#222">Awesome</div>
<div class="a" style="left:34px;top:448px;width:9px;height:0;border-top:1px dotted #b4b4b4"></div>
<svg class="a" style="left:43px;top:441px" width="15" height="15"><rect x="0.5" y="0.5" width="11.5" height="11.5" rx="2" fill="#f4d868" stroke="#d0a838"/><path d="M8.5 2.5Q7 2 6.5 4L5 10Q4.5 11.5 3 11M4 5.5h4" stroke="#7a5a10" stroke-width="1.1" fill="none"/><path d="M11.5 8.5l2.5 2.5-2.5 2.5-2.5-2.5z" fill="#f4d868" stroke="#c09030" stroke-width="0.9"/></svg>
<div class="t" style="left:61px;top:442px;font-size:11px;-webkit-text-stroke:0.2px #222;color:#222">Bands</div>
<div class="a" style="left:34px;top:465px;width:9px;height:0;border-top:1px dotted #b4b4b4"></div>
<svg class="a" style="left:43px;top:458px" width="15" height="15"><rect x="0.5" y="0.5" width="11.5" height="11.5" rx="2" fill="#f4d868" stroke="#d0a838"/><path d="M8.5 2.5Q7 2 6.5 4L5 10Q4.5 11.5 3 11M4 5.5h4" stroke="#7a5a10" stroke-width="1.1" fill="none"/><path d="M11.5 8.5l2.5 2.5-2.5 2.5-2.5-2.5z" fill="#f4d868" stroke="#c09030" stroke-width="0.9"/></svg>
<div class="t" style="left:61px;top:459px;font-size:11px;-webkit-text-stroke:0.2px #222;color:#222">Bears</div>
<div class="a" style="left:34px;top:481px;width:9px;height:0;border-top:1px dotted #b4b4b4"></div>
<svg class="a" style="left:43px;top:474px" width="15" height="15"><rect x="0.5" y="0.5" width="11.5" height="11.5" rx="2" fill="#f4d868" stroke="#d0a838"/><path d="M8.5 2.5Q7 2 6.5 4L5 10Q4.5 11.5 3 11M4 5.5h4" stroke="#7a5a10" stroke-width="1.1" fill="none"/><path d="M11.5 8.5l2.5 2.5-2.5 2.5-2.5-2.5z" fill="#f4d868" stroke="#c09030" stroke-width="0.9"/></svg>
<div class="t" style="left:61px;top:475px;font-size:11px;-webkit-text-stroke:0.2px #222;color:#222">Bulls</div>
<div class="a" style="left:34px;top:498px;width:9px;height:0;border-top:1px dotted #b4b4b4"></div>
<svg class="a" style="left:43px;top:491px" width="15" height="15"><rect x="0.5" y="0.5" width="11.5" height="11.5" rx="2" fill="#f4d868" stroke="#d0a838"/><path d="M8.5 2.5Q7 2 6.5 4L5 10Q4.5 11.5 3 11M4 5.5h4" stroke="#7a5a10" stroke-width="1.1" fill="none"/><path d="M11.5 8.5l2.5 2.5-2.5 2.5-2.5-2.5z" fill="#f4d868" stroke="#c09030" stroke-width="0.9"/></svg>
<div class="t" style="left:61px;top:492px;font-size:11px;-webkit-text-stroke:0.2px #222;color:#222">CCI</div>
<div class="a" style="left:34px;top:514px;width:9px;height:0;border-top:1px dotted #b4b4b4"></div>
<svg class="a" style="left:43px;top:507px" width="15" height="15"><rect x="0.5" y="0.5" width="11.5" height="11.5" rx="2" fill="#f4d868" stroke="#d0a838"/><path d="M8.5 2.5Q7 2 6.5 4L5 10Q4.5 11.5 3 11M4 5.5h4" stroke="#7a5a10" stroke-width="1.1" fill="none"/><path d="M11.5 8.5l2.5 2.5-2.5 2.5-2.5-2.5z" fill="#f4d868" stroke="#c09030" stroke-width="0.9"/></svg>
<div class="t" style="left:61px;top:508px;font-size:11px;-webkit-text-stroke:0.2px #222;color:#222">Custom Moving Averages</div>
<div class="a" style="left:34px;top:531px;width:9px;height:0;border-top:1px dotted #b4b4b4"></div>
<svg class="a" style="left:43px;top:524px" width="15" height="15"><rect x="0.5" y="0.5" width="11.5" height="11.5" rx="2" fill="#f4d868" stroke="#d0a838"/><path d="M8.5 2.5Q7 2 6.5 4L5 10Q4.5 11.5 3 11M4 5.5h4" stroke="#7a5a10" stroke-width="1.1" fill="none"/><path d="M11.5 8.5l2.5 2.5-2.5 2.5-2.5-2.5z" fill="#f4d868" stroke="#c09030" stroke-width="0.9"/></svg>
<div class="t" style="left:61px;top:525px;font-size:11px;-webkit-text-stroke:0.2px #222;color:#222">Heiken Ashi</div>
<div class="a" style="left:233px;top:388px;width:14px;height:151px;background:#f0f0f0"></div>
<svg class="a" style="left:235px;top:394px" width="10" height="7"><path d="M1 6L5 2L9 6" stroke="#444" stroke-width="1.5" fill="none"/></svg>
<div class="a" style="left:233px;top:488px;width:13px;height:51px;background:#cbcbcb"></div>
<div class="a" style="left:247px;top:87px;width:3px;height:452px;background:#e8e8e8"></div>
<!--/LEFT-->
<!--CHART-->
<svg class="a" style="left:0;top:0" width="1425" height="539" viewBox="0 0 1425 539">
<rect x="250" y="87" width="1175" height="452" fill="#000"/>
<path d="M253.5 539V90.5H1425" stroke="#9a9a9a" stroke-width="1" fill="none"/>
<path d="M280.5 91V539M307.5 91V539M333.5 91V539M360.5 91V539M386.5 91V539M413.5 91V539M440.5 91V539M466.5 91V539M493.5 91V539M519.5 91V539M546.5 91V539M573.5 91V539M599.5 91V539M626.5 91V539M652.5 91V539M679.5 91V539M706.5 91V539M732.5 91V539M759.5 91V539M785.5 91V539M812.5 91V539M838.5 91V539M865.5 91V539M892.5 91V539M918.5 91V539M945.5 91V539M971.5 91V539M998.5 91V539M1025.5 91V539M1051.5 91V539M1078.5 91V539M1104.5 91V539M1131.5 91V539M1158.5 91V539M1184.5 91V539M1211.5 91V539M1237.5 91V539M1264.5 91V539M1291.5 91V539M1317.5 91V539M1344.5 91V539M1370.5 91V539M1397.5 91V539M1424.5 91V539" stroke="#b0b0b0" stroke-width="1" stroke-dasharray="2 2.85" fill="none"/><path d="M254 99.5H1425M254 127.5H1425M254 154.5H1425M254 182.5H1425M254 209.5H1425M254 237.5H1425M254 264.5H1425M254 292.5H1425M254 320.5H1425M254 347.5H1425M254 375.5H1425M254 402.5H1425M254 430.5H1425M254 457.5H1425M254 485.5H1425M254 512.5H1425" stroke="#b0b0b0" stroke-width="1" stroke-dasharray="3 1.85" fill="none"/>
<path d="M255 277.5H1425" stroke="#b01a10" stroke-width="2" stroke-dasharray="10 6 3 6" fill="none"/>
<path d="M255 364.5H1425" stroke="#2a9a2a" stroke-width="1" stroke-dasharray="8 5" fill="none"/>
<path d="M255 372.5H1425" stroke="#7a7a7a" stroke-width="1" fill="none"/>
<path d="M255 374.5H1425" stroke="#2a9a2a" stroke-width="2" stroke-dasharray="8 3 3 3" fill="none"/>
<path d="M253.0 462.2V468.5M254.0 465.6V473.8M255.0 471.5V477.1M256.0 469.7V473.4M257.0 462.8V467.7M258.0 469.4V481.7M259.0 460.5V470.2M260.0 461.2V471.6M261.0 465.7V476.0M262.0 465.3V473.4M263.0 456.9V465.2M264.0 456.7V463.0M265.0 453.5V463.6M266.0 441.9V457.4M267.0 439.0V454.9M268.0 416.6V441.0M269.0 418.7V451.3M270.0 443.6V458.7M271.0 457.1V469.4M272.0 459.7V471.7M273.0 461.0V472.7M274.0 459.4V469.6M275.0 468.7V482.2M276.0 464.2V475.4M277.0 464.8V478.1M278.0 469.9V487.2M279.0 492.8V505.6M280.0 499.2V520.2M281.0 512.5V536.0M282.0 528.4V543.6M283.0 525.2V547.3M1018.0 335.1V341.3M1019.0 327.7V337.3M1020.0 341.6V347.0M1021.0 332.9V341.0M1022.0 339.0V344.5M1023.0 325.2V338.1M1024.0 333.2V343.0M1025.0 323.6V339.2M1026.0 319.7V335.2M1027.0 319.1V329.1M1028.0 320.8V327.1M1029.0 312.5V321.8M1030.0 311.0V318.9M1031.0 311.5V336.4M1032.0 324.8V348.9M1033.0 341.8V355.4M1034.0 350.9V372.7M1035.0 357.1V368.9M1036.0 369.0V383.4M1037.0 371.1V387.7M1038.0 356.5V371.3M1039.0 348.8V368.6M1040.0 338.6V358.7M1041.0 340.4V350.4M1042.0 339.5V351.7M1043.0 330.9V346.0M1044.0 334.1V348.8M1045.0 340.8V350.1M1046.0 335.2V342.4M1047.0 346.6V357.1M1048.0 343.0V356.2M1049.0 354.9V365.9M1050.0 346.8V352.6M1051.0 350.3V362.6M1052.0 351.6V362.7M1053.0 351.5V359.1M1054.0 346.1V359.4M1055.0 356.8V365.7M1056.0 353.0V362.5M1057.0 360.8V371.6M1058.0 355.5V363.5M1059.0 357.1V370.1M1060.0 362.4V371.0M1061.0 365.6V373.7M1062.0 361.9V365.5M1063.0 362.8V376.6M1064.0 354.5V367.3M1065.0 354.6V362.9M1066.0 348.4V358.4M1067.0 348.0V359.2M1068.0 350.5V362.4M1069.0 344.9V359.9M1070.0 352.2V365.4M1071.0 360.7V371.4M1072.0 368.9V383.4M1073.0 374.2V391.5M1074.0 385.9V400.6M1075.0 385.6V400.8M1076.0 397.7V412.1M1077.0 407.7V426.9M1078.0 410.1V429.5M1079.0 422.8V438.4M1080.0 430.0V444.3M1081.0 429.3V447.2M1082.0 443.7V459.3M1083.0 441.8V456.0M1084.0 454.8V462.6M1085.0 458.0V466.9M1086.0 450.2V464.7M1087.0 450.5V459.7M1088.0 448.1V463.7M1089.0 445.7V455.4M1090.0 446.5V461.9M1091.0 442.2V450.0M1092.0 444.7V450.4M1093.0 438.7V447.3M1094.0 440.7V445.4M1095.0 437.5V446.4M1096.0 432.6V445.8M1097.0 441.6V449.1M1098.0 439.1V444.1M1099.0 425.3V435.7M1100.0 437.7V448.1M1101.0 427.6V432.4M1102.0 424.5V435.2M1103.0 432.6V445.2M1104.0 430.1V439.8M1105.0 429.4V437.4M1106.0 424.0V436.1M1107.0 419.9V427.7M1108.0 423.2V428.0M1109.0 422.4V432.3M1110.0 422.4V435.0M1111.0 426.2V434.7M1112.0 433.2V441.1M1113.0 437.4V449.0M1114.0 434.7V448.6M1115.0 448.9V464.6M1116.0 433.6V457.7M1117.0 416.8V442.5M1118.0 392.6V419.3M1119.0 403.0V407.1M1120.0 408.4V416.3M1121.0 407.4V416.0M1122.0 405.9V418.1M1123.0 407.7V415.2M1124.0 412.6V419.2M1125.0 405.4V417.5M1126.0 420.4V430.7M1127.0 412.1V417.1M1128.0 412.8V421.4M1129.0 413.1V417.4M1130.0 414.6V420.2M1131.0 409.3V415.3M1132.0 406.4V415.8M1133.0 404.7V417.0M1134.0 401.5V410.0M1135.0 408.8V421.1M1136.0 412.8V422.2M1137.0 414.9V428.3M1138.0 413.6V421.8M1139.0 408.2V422.2M1140.0 418.2V431.2M1141.0 420.4V426.5M1142.0 420.8V428.3M1143.0 430.9V442.5M1144.0 431.8V444.2M1145.0 428.9V442.7M1146.0 433.5V444.2M1147.0 433.9V446.3M1148.0 442.0V450.5M1149.0 443.3V460.0M1150.0 447.2V458.9M1151.0 440.5V457.4M1152.0 440.6V453.6M1153.0 434.4V449.2M1154.0 429.3V441.4M1155.0 422.5V439.3M1156.0 417.0V428.8M1157.0 409.3V418.8M1158.0 406.2V418.8M1159.0 420.0V426.3M1160.0 407.4V421.5M1161.0 410.9V421.2M1162.0 415.8V424.0M1163.0 414.6V424.5M1164.0 415.3V427.4M1165.0 417.5V428.4M1166.0 406.1V413.3M1167.0 411.8V420.5M1168.0 407.5V414.6M1169.0 403.4V412.1M1170.0 405.1V415.0M1171.0 403.5V413.3M1172.0 399.9V407.1M1173.0 407.8V415.1M1174.0 404.2V408.8M1175.0 410.1V420.1M1176.0 409.6V415.3M1177.0 403.2V413.8M1178.0 402.9V415.7M1179.0 397.8V409.0M1180.0 398.3V405.3M1181.0 403.1V413.8M1182.0 402.1V406.5M1183.0 406.1V413.4M1184.0 404.4V413.0M1185.0 405.4V413.5M1186.0 402.6V410.6M1187.0 405.8V414.8M1188.0 404.8V419.8M1189.0 421.7V436.0M1190.0 415.6V428.0M1191.0 422.1V434.7M1192.0 414.7V433.0M1193.0 406.7V421.9M1194.0 395.7V409.6M1195.0 390.8V407.0M1196.0 390.6V400.9M1197.0 391.0V397.6M1198.0 385.2V393.8M1199.0 389.3V398.1M1200.0 384.4V392.3M1201.0 384.6V391.6M1202.0 378.7V390.1M1203.0 379.3V390.1M1204.0 375.2V381.2M1205.0 373.5V387.9M1206.0 382.2V395.0M1207.0 384.7V394.0M1208.0 391.4V402.7M1209.0 388.6V395.7M1210.0 382.1V395.0M1211.0 383.3V394.8M1212.0 381.1V389.6M1213.0 377.5V386.9M1214.0 370.8V385.3M1215.0 375.6V383.3M1216.0 360.4V377.6M1217.0 360.4V374.6M1218.0 356.7V367.9M1219.0 348.0V356.7M1220.0 339.2V350.9M1221.0 337.3V353.6M1222.0 334.4V344.1M1223.0 334.2V345.9M1224.0 330.8V342.1M1225.0 323.9V333.4M1226.0 332.8V342.1M1227.0 317.2V325.9M1228.0 310.4V322.9M1229.0 315.5V324.1M1230.0 306.8V323.4M1231.0 300.6V314.0M1232.0 290.5V303.1M1233.0 295.8V307.9M1234.0 292.9V302.9M1235.0 283.1V300.2M1236.0 267.7V287.6M1237.0 262.0V282.5M1238.0 244.9V265.9M1239.0 240.5V261.7M1240.0 236.0V244.4M1241.0 231.2V243.6M1242.0 224.9V234.7M1243.0 222.7V234.8M1244.0 219.8V234.7M1245.0 216.8V233.4M1246.0 230.0V243.1M1247.0 233.2V245.0M1248.0 236.7V253.2M1249.0 244.1V255.6M1250.0 236.6V257.5M1251.0 230.6V245.5M1252.0 224.0V240.0M1253.0 217.3V236.3M1254.0 203.9V218.9M1255.0 194.9V214.1M1256.0 190.8V210.5M1257.0 176.8V194.3M1258.0 176.3V188.6M1259.0 185.5V192.0M1260.0 174.3V182.2M1261.0 181.8V190.1M1262.0 179.2V191.4M1263.0 184.9V194.0M1264.0 179.5V190.7M1265.0 186.2V196.2M1266.0 193.3V200.6M1267.0 199.2V209.0M1268.0 204.5V217.2M1269.0 195.9V209.0M1270.0 199.6V210.5M1271.0 196.6V214.8M1272.0 214.5V224.3M1273.0 215.3V232.4M1274.0 221.2V236.8M1275.0 217.0V240.2M1276.0 192.5V215.8M1277.0 180.7V201.2M1278.0 167.4V186.5M1279.0 151.9V174.1M1280.0 160.7V170.3M1281.0 158.8V169.4M1282.0 160.4V176.1M1283.0 171.9V185.2M1284.0 175.2V187.2M1285.0 184.3V194.0M1286.0 190.3V203.3M1287.0 187.1V197.3M1288.0 193.5V210.2M1289.0 188.5V199.7M1290.0 192.5V203.5M1291.0 178.9V192.3M1292.0 183.7V193.1M1293.0 180.4V195.4M1294.0 176.1V186.0M1295.0 168.9V177.1M1296.0 168.9V183.2M1297.0 167.3V184.0M1298.0 174.4V182.3M1299.0 183.0V192.3M1300.0 172.1V186.0M1301.0 184.1V196.0M1302.0 179.5V189.6M1303.0 174.4V184.5M1304.0 185.5V193.2M1305.0 176.8V183.1M1306.0 174.3V188.0M1307.0 171.3V185.6M1308.0 160.1V175.4M1309.0 149.2V164.3M1310.0 143.9V159.4M1311.0 134.5V149.0M1312.0 136.7V149.8M1313.0 120.1V138.6M1314.0 117.4V130.5M1315.0 117.6V126.1M1316.0 122.9V131.3M1317.0 121.5V131.0M1318.0 125.0V139.3M1319.0 128.5V138.9M1320.0 130.0V141.7M1321.0 141.9V157.6M1322.0 133.1V146.6M1323.0 133.5V146.4M1324.0 147.9V164.6M1325.0 155.0V166.9M1326.0 152.5V166.0M1327.0 150.0V164.9M1328.0 144.8V154.0M1329.0 140.1V147.8M1330.0 137.9V150.9M1331.0 134.8V144.3M1332.0 133.4V141.1M1333.0 135.2V147.6M1334.0 138.4V151.0M1335.0 151.1V161.1M1336.0 149.9V167.3M1337.0 159.4V177.2M1338.0 163.1V177.8M1339.0 170.0V187.5M1340.0 179.1V199.8M1341.0 181.9V190.6M1342.0 180.5V188.4M1343.0 172.7V188.0M1344.0 170.5V179.5M1345.0 168.6V177.5M1346.0 167.8V179.5M1347.0 173.2V187.0M1348.0 183.8V199.4M1349.0 194.0V205.3M1350.0 202.6V216.0M1351.0 205.8V218.5M1352.0 206.2V218.8M1353.0 210.5V225.7M1354.0 217.1V234.2M1355.0 228.8V239.3M1356.0 239.1V250.0M1357.0 244.6V255.2M1358.0 240.7V254.4M1359.0 247.9V261.9M1360.0 254.3V267.4M1361.0 258.4V271.3M1362.0 260.3V274.0M1363.0 261.8V273.8M1364.0 252.6V264.5M1365.0 252.9V259.2M1366.0 253.6V262.7M1367.0 248.0V256.5M1368.0 245.5V254.1M1369.0 255.2V263.3M1370.0 246.5V256.2M1371.0 254.0V260.9M1372.0 248.4V262.4M1373.0 246.1V257.2M1374.0 245.0V255.8M1375.0 240.1V253.8M1376.0 239.1V250.8M1377.0 239.1V250.0M1378.0 234.0V245.6M1379.0 248.9V261.1M1380.0 256.4V263.7M1381.0 261.0V270.2M1382.0 265.8V271.6M1383.0 258.4V272.3M1384.0 262.6V271.9M1385.0 261.9V281.1M1386.0 282.5V297.1M1387.0 291.6V302.5M1388.0 287.0V296.9M1389.0 298.9V318.6M1390.0 299.0V315.5M1391.0 313.7V336.0M1392.0 330.5V351.5M1393.0 335.2V355.0M1394.0 320.6V338.5M1395.0 309.7V332.2M1396.0 297.9V314.3M1397.0 270.7V299.7M1398.0 256.8V284.0M1399.0 233.1V261.7M1400.0 235.8V243.5M1401.0 242.2V251.7M1402.0 233.4V247.6M1403.0 250.1V263.6M1404.0 257.2V270.9M1405.0 254.8V268.5M1406.0 265.7V275.2M1407.0 268.2V282.1M1408.0 269.2V280.1M1409.0 264.8V275.7M1410.0 272.7V283.2M1411.0 272.3V284.8M1412.0 275.4V286.9M1413.0 270.2V281.9M1414.0 270.4V282.7M1415.0 266.3V276.3M1416.0 267.6V281.0M1417.0 269.2V282.3M1418.0 277.5V286.1M1419.0 278.8V286.7M1420.0 275.1V289.4M1421.0 282.8V289.1M1422.0 280.9V287.8M1423.0 274.6V287.6M1424.0 282.1V291.3M1425.0 276.7V290.2M1426.0 276.7V286.5M518 514V539M517 525V539M679 514V521" stroke="#149a14" stroke-width="1" fill="none"/>
</svg>
<!--/CHART-->
<!--DIALOG-->
<div class="a" style="left:393px;top:198px;width:626px;height:316px;background:#f0f0f0;border:1px solid #9a9a9a;box-shadow:0 0 4px rgba(0,0,0,0.4)"></div>
<div class="a" style="left:394px;top:199px;width:624px;height:25px;background:#fff"></div>
<div class="t" style="left:399px;top:205px;font-size:10.3px;color:#111">订单 #33</div>
<div class="a" style="left:439px;top:205px;width:26px;height:13px;background:#bcbcbc"></div>
<div class="t" style="left:466px;top:205px;font-size:10.5px;color:#111">53 sell</div>
<div class="a" style="left:497px;top:205px;width:20px;height:13px;background:#bcbcbc"></div>
<div class="t" style="left:521px;top:205px;font-size:10.3px;color:#111">EURUSD.s 于价格: 1.11120 止损: 0.00000 获利: 0.00000</div>
<svg class="a" style="left:918px;top:204px" width="90" height="14"><path d="M1 7.5h9" stroke="#222" stroke-width="1"/><rect x="39.5" y="2.5" width="8" height="8" fill="none" stroke="#d0d0d0"/><path d="M77.5 2.5l8.5 8.5M86 2.5L77.5 11" stroke="#222" stroke-width="1"/></svg>
<div class="a" style="left:399px;top:234px;width:248px;height:273px;background:#fff;border:1px solid #a8a8a8;border-right-color:#e8e8e8;border-bottom-color:#e8e8e8"></div>
<svg class="a" style="left:0;top:0;z-index:2" width="1425" height="539" viewBox="0 0 1425 539">
<path d="M430.5 239V503M457.5 239V503M483.5 239V503M510.5 239V503M536.5 239V503M563.5 239V503M589.5 239V503M402 261.5H610M402 288.5H610M402 315.5H610M402 342.5H610M402 369.5H610M402 395.5H610M402 422.5H610M402 449.5H610M402 475.5H610" stroke="#cfcfcf" stroke-dasharray="3 3" fill="none"/>
<polyline points="402.5,288.6 403.3,288.6 403.8,320 406.4,321 407.7,329 410,329 412,360 414,341 415.5,360 417,341 419,360 420.7,341 424,279.5 426,269 426.7,279.5 429.3,279.5 430.4,269 610,269" stroke="#f07a6a" stroke-width="1.2" fill="none"/>
<polyline points="402.5,391 403.3,391 403.8,421 406.4,422.5 407.7,431.6 410.3,431.6 412,443 413.7,473 415.5,443 416.8,453.8 418.4,473 420.7,443 424,371.7 426,370.4 427.3,391 429.3,371.7 431,370.5 610,370.5" stroke="#3a7ae8" stroke-width="1.2" fill="none"/>
<rect x="401.5" y="238.5" width="209" height="265" fill="none" stroke="#222"/>
<path d="M610 263.5h3" stroke="#222"/><text x="614.5" y="266.1" font-size="8.6" font-family="Liberation Sans" fill="#111" stroke="#111" stroke-width="0.25">1.11139</text><path d="M610 290.5h3" stroke="#222"/><text x="614.5" y="293.3" font-size="8.6" font-family="Liberation Sans" fill="#111" stroke="#111" stroke-width="0.25">1.11136</text><path d="M610 316.5h3" stroke="#222"/><text x="614.5" y="319.9" font-size="8.6" font-family="Liberation Sans" fill="#111" stroke="#111" stroke-width="0.25">1.11133</text><path d="M610 343.5h3" stroke="#222"/><text x="614.5" y="346.5" font-size="8.6" font-family="Liberation Sans" fill="#111" stroke="#111" stroke-width="0.25">1.11131</text><path d="M610 396.5h3" stroke="#222"/><text x="614.5" y="399.5" font-size="8.6" font-family="Liberation Sans" fill="#111" stroke="#111" stroke-width="0.25">1.11125</text><path d="M610 423.5h3" stroke="#222"/><text x="614.5" y="426.5" font-size="8.6" font-family="Liberation Sans" fill="#111" stroke="#111" stroke-width="0.25">1.11123</text><path d="M610 450.5h3" stroke="#222"/><text x="614.5" y="453.0" font-size="8.6" font-family="Liberation Sans" fill="#111" stroke="#111" stroke-width="0.25">1.11120</text><path d="M610 476.5h3" stroke="#222"/><text x="614.5" y="479.5" font-size="8.6" font-family="Liberation Sans" fill="#111" stroke="#111" stroke-width="0.25">1.11118</text><path d="M610 500.5h3" stroke="#222"/><text x="614.5" y="504.0" font-size="8.6" font-family="Liberation Sans" fill="#111" stroke="#111" stroke-width="0.25">1.11115</text>
<rect x="611" y="264.5" width="34" height="9" fill="#f07060"/><text x="614" y="272.2" font-size="8.6" font-family="Liberation Sans" fill="#fff">1.11138</text>
<rect x="611" y="366.5" width="34" height="9.5" fill="#1a6ae8"/><text x="614" y="374.5" font-size="8.6" font-family="Liberation Sans" fill="#fff">1.11128</text>
<text x="404" y="248.5" font-size="9" font-family="Liberation Sans" fill="#111">EURUSD.s</text>
</svg>
<div class="t" style="right:696px;top:238px;font-size:10px;color:#111">交易品种:</div>
<div class="t" style="right:696px;top:260px;font-size:10px;color:#111">手数:</div>
<div class="t" style="right:696px;top:281px;font-size:10px;color:#111">止损价:</div>
<div class="t" style="right:696px;top:303px;font-size:10px;color:#111">注释:</div>
<div class="t" style="right:696px;top:325px;font-size:10px;color:#111">交易类型:</div>
<div class="t" style="right:515px;top:281px;font-size:10px;color:#111">获利价:</div>
<div class="a" style="left:735px;top:234px;width:269px;height:18px;background:#e3e3e3;border:1px solid #b0b0b0"></div>
<div class="t" style="left:738px;top:238px;font-size:10.5px;color:#111;transform:scaleX(0.82);transform-origin:0 0">EURUSD.s, Euro vs US Dollar</div>
<svg class="a" style="left:992px;top:240px" width="9" height="6"><path d="M0.5 0.5L4.5 4.5L8.5 0.5" stroke="#333" fill="none"/></svg>
<div class="a" style="left:735px;top:256px;width:88px;height:18px;background:#fff;border:1px solid #8a8a8a"></div>
<div class="a" style="left:737px;top:258px;width:22px;height:13px;background:#bcbcbc"></div>
<svg class="a" style="left:811px;top:262px" width="9" height="6"><path d="M0.5 0.5L4.5 4.5L8.5 0.5" stroke="#333" fill="none"/></svg>
<div class="a" style="left:735px;top:277px;width:88px;height:17px;background:#fff;border:1px solid #9a9a9a"></div>
<div class="t" style="right:620px;top:281px;font-size:9.5px;color:#111">0.00000</div>
<div class="a" style="left:809px;top:278px;width:13px;height:15px;background:#e8e8e8;border-left:1px solid #c8c8c8"></div>
<svg class="a" style="left:812px;top:280px" width="7" height="11"><path d="M0 4L3.5 0.5L7 4Z M0 7L3.5 10.5L7 7Z" fill="#333"/></svg>
<div class="a" style="left:916px;top:277px;width:87px;height:17px;background:#fff;border:1px solid #9a9a9a"></div>
<div class="t" style="right:440px;top:281px;font-size:9.5px;color:#111">0.00000</div>
<div class="a" style="left:989px;top:278px;width:13px;height:15px;background:#e8e8e8;border-left:1px solid #c8c8c8"></div>
<svg class="a" style="left:992px;top:280px" width="7" height="11"><path d="M0 4L3.5 0.5L7 4Z M0 7L3.5 10.5L7 7Z" fill="#333"/></svg>
<div class="a" style="left:735px;top:299px;width:269px;height:17px;background:#fff;border:1px solid #9a9a9a"></div>
<div class="a" style="left:735px;top:321px;width:269px;height:17px;background:#e3e3e3;border:1px solid #b0b0b0"></div>
<div class="t" style="left:738px;top:325px;font-size:10px;color:#111">市价成交</div>
<svg class="a" style="left:992px;top:327px" width="9" height="6"><path d="M0.5 0.5L4.5 4.5L8.5 0.5" stroke="#333" fill="none"/></svg>
<div class="a" style="left:654px;top:351px;width:356px;height:155px;border:1px solid #dcdcdc;border-radius:2px"></div>
<div class="a" style="left:659px;top:345px;width:46px;height:12px;background:#f0f0f0"></div>
<div class="t" style="left:661px;top:346px;font-size:10px;color:#111">市价成交</div>
<div class="t" style="left:745px;top:375px;font-size:23px;color:#111;transform:scaleX(0.97);transform-origin:0 0">1.1112</div>
<div class="t" style="left:810px;top:380px;font-size:16px;color:#111">8</div>
<div class="t" style="left:828px;top:375px;font-size:23px;color:#111">/</div>
<div class="t" style="left:843px;top:375px;font-size:23px;color:#111;transform:scaleX(0.97);transform-origin:0 0">1.1113</div>
<div class="t" style="left:909px;top:380px;font-size:16px;color:#111">8</div>
<div class="a" style="left:834px;top:395px;width:92px;height:7px;background:#f0302a"></div>
<div class="a" style="left:667px;top:413px;width:155px;height:18px;background:#ff8c7c;border:1px solid #b0b0b0"></div>
<div class="t" style="left:725px;top:417px;font-size:10px;color:#111">于市价卖</div>
<div class="a" style="left:842px;top:413px;width:155px;height:18px;background:#98bcff;border:1px solid #b0b0b0"></div>
<div class="t" style="left:900px;top:417px;font-size:10px;color:#111">于市价买</div>
<div class="a" style="left:667px;top:438px;width:330px;height:18px;background:#f0e68c;border:1px solid #3a6ab8;box-shadow:inset 0 0 0 1px #7aa0d8"></div>
<div class="t" style="left:743px;top:441px;font-size:10px;color:#111">平仓 #33</div>
<div class="a" style="left:782px;top:440px;width:20px;height:14px;background:#bcbcbc"></div>
<div class="t" style="left:802px;top:441px;font-size:10px;letter-spacing:-0.3px;color:#111">53 sell</div>
<div class="a" style="left:826px;top:440px;width:23px;height:14px;background:#bcbcbc"></div>
<div class="t" style="left:849px;top:441px;font-size:10px;letter-spacing:-0.5px;color:#111">EURUSD.s于市价</div>
<svg class="a" style="left:817px;top:446px;z-index:3" width="10" height="14"><path d="M0.5 0.5v11l2.8-2.6 2.2 4.5 1.8-.9-2.1-4.4h3.8z" fill="#fff" stroke="#111" stroke-width="0.9"/></svg>
<div class="t" style="left:670px;top:466px;font-size:10.3px;letter-spacing:0.17px;color:#111">注意: 市价交易模式下的实际成交价格，可能会和请求价格有一定差异!</div>
<!--/DIALOG-->
<!--OVERLAY-->
<svg class="a" style="left:257px;top:94px" width="8" height="6"><path d="M0 5.5L4 1L8 5.5Z" fill="#fff"/></svg>
<div class="t" style="left:267px;top:93px;font-size:9.5px;letter-spacing:0;color:#f0f0f0;transform:scaleX(0.82);transform-origin:0 0">EURUSD.s,H1&nbsp; 1.11048 1.11168 1.11034 1.11128</div>
<div class="a" style="left:254px;top:104px;width:186px;height:57px;background:#000"></div>
<div class="a" style="left:255px;top:106px;width:43px;height:20px;background:#4250ee"></div>
<div class="t" style="left:266px;top:112px;font-size:10px;font-weight:bold;color:#dde0ff">SELL</div>
<div class="a" style="left:259px;top:124px;width:37px;height:1px;background:#6a78f8"></div>
<div class="a" style="left:255px;top:126px;width:91px;height:33px;background:linear-gradient(#3642ea,#0c16b8)"></div>
<div class="a" style="left:395px;top:106px;width:43px;height:20px;background:#4250ee"></div>
<div class="t" style="left:405px;top:112px;font-size:10px;font-weight:bold;color:#dde0ff">BUY</div>
<div class="a" style="left:398px;top:124px;width:37px;height:1px;background:#6a78f8"></div>
<div class="a" style="left:348px;top:126px;width:90px;height:33px;background:linear-gradient(#3642ea,#0c16b8)"></div>
<div class="t" style="left:273px;top:143px;font-size:11px;font-weight:bold;color:#fff">1.11</div>
<div class="t" style="left:364px;top:143px;font-size:11px;font-weight:bold;color:#fff">1.11</div>
<div class="t" style="left:296px;top:129px;font-size:27px;color:#fff">12</div>
<div class="t" style="left:387px;top:129px;font-size:27px;color:#fff">13</div>
<div class="t" style="left:328px;top:131px;font-size:10px;font-weight:bold;color:#fff">8</div>
<div class="t" style="left:422px;top:131px;font-size:10px;font-weight:bold;color:#fff">8</div>
<div class="a" style="left:301px;top:107px;width:92px;height:18px;background:#fff;border:1px solid #d8d8d8"></div>
<div class="a" style="left:301px;top:107px;width:17px;height:18px;background:#e4e4e4;border-right:1px solid #c8c8c8"></div>
<div class="a" style="left:375px;top:107px;width:18px;height:18px;background:#e4e4e4;border-left:1px solid #c8c8c8"></div>
<svg class="a" style="left:306px;top:114px" width="7" height="4"><path d="M0 0H7L3.5 3.5Z" fill="#111"/></svg>
<svg class="a" style="left:381px;top:113px" width="7" height="4"><path d="M0 4H7L3.5 0.5Z" fill="#111"/></svg>
<div class="a" style="left:350px;top:109px;width:22px;height:13px;background:#bdbdbd"></div>
<div class="a" style="left:259px;top:267px;width:48px;height:12px;background:#c8c8c8"></div>
<div class="a" style="left:257px;top:355px;width:89px;height:9px;background:#c8c8c8"></div>
<div class="a" style="left:257px;top:363px;width:93px;height:13px;background:#c8c8c8"></div>
<div class="t" style="left:1277px;top:89px;font-size:11px;color:#f4f4f4;font-weight:bold;font-family:'Liberation Mono',monospace;letter-spacing:0px">GMT+00h: 1-9 12:45:28</div>
<div class="a" style="left:1274px;top:19px;width:151px;height:68px;background:#6e6e6e;z-index:20"></div>
<div class="a" style="left:1277px;top:19px;width:148px;height:25px;background:#fff;z-index:20"></div>
<svg class="a" style="left:1284px;top:20px;z-index:21" width="22" height="22"><circle cx="11" cy="11" r="10" fill="#9a3412" stroke="#5a1a08"/><path d="M11 3l2.2 5.5 5.8.4-4.5 3.7 1.5 5.6L11 15.1l-5 3.1 1.5-5.6L3 8.9l5.8-.4z" fill="#e8d0a0" opacity="0.85"/><circle cx="11" cy="11" r="3" fill="#9a3412"/></svg>
<div class="t" style="left:1310px;top:25px;font-size:14px;font-weight:bold;font-style:italic;color:#1a3c9c;z-index:21;letter-spacing:0.5px">赠汇争端证据宝</div>
<div class="a" style="left:1419px;top:29px;width:6px;height:6px;border-radius:3px;background:#1a3c9c;z-index:21"></div>
<div class="t" style="left:1278px;top:47px;font-size:12px;color:#eaeaea;z-index:21">网络</div>
<div class="t" style="left:1303px;top:47px;font-size:12px;color:#eaeaea;z-index:21;font-weight:bold">:</div>
<div class="t" style="left:1310px;top:47px;font-size:12.5px;color:#e83a22;z-index:21">连接异常</div>
<div class="t" style="left:1278px;top:67px;font-size:12px;color:#eaeaea;z-index:21">北京时间</div>
<div class="t" style="left:1326px;top:67px;font-size:11.3px;color:#eaeaea;z-index:21;font-family:'Liberation Mono',monospace;letter-spacing:0px">:1-9 20:45:28</div>
<div class="a" style="left:1276px;top:80px;width:143px;height:7px;background:#f03434;z-index:21"></div>
<svg class="a" style="left:0;top:0;z-index:30" width="1425" height="539"><polygon points="921,372.5 948.3,364.3 939.6,363.6 1266.6,87 1265.6,87 933.1,355.8 933.8,347.2" fill="#f03a3a"/></svg>
<!--/OVERLAY-->
</body></html>
